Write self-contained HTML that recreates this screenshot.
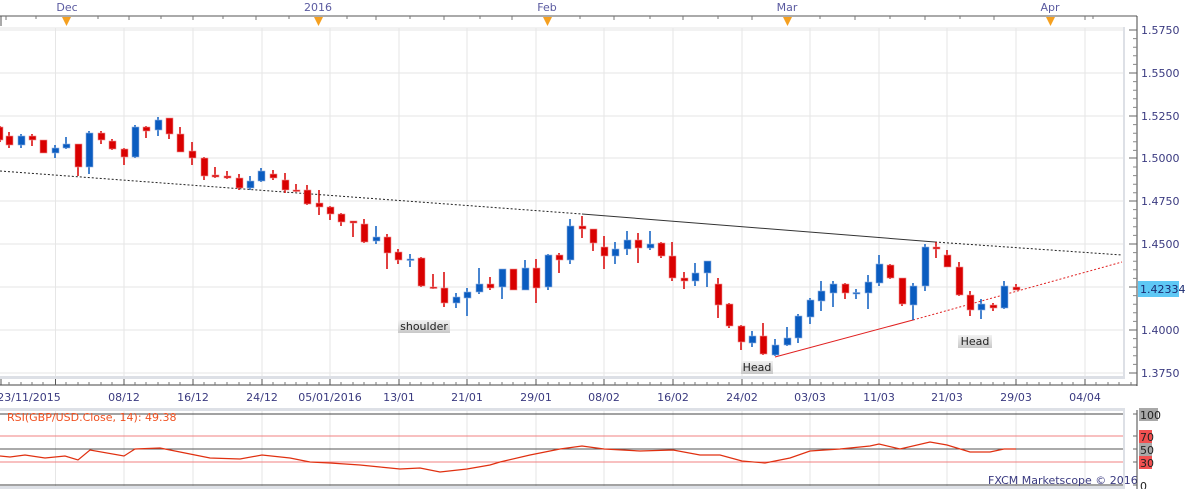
<!DOCTYPE html>
<html><head><meta charset="utf-8"><style>
html,body{margin:0;padding:0;background:#fff;}
svg{display:block;font-family:"DejaVu Sans","Liberation Sans",sans-serif;}
.r line{stroke:#d90000;stroke-width:1.5}
.r rect{fill:#d90000;stroke:#f09090;stroke-width:0.6}
.b line{stroke:#0a5cc0;stroke-width:1.5}
.b rect{fill:#0a5cc0;stroke:#8fb0e0;stroke-width:0.6}
.ax{fill:#3a3a80;font-size:11px}
</style></head><body>
<svg width="1188" height="489" viewBox="0 0 1188 489" xmlns="http://www.w3.org/2000/svg">
<rect width="1188" height="489" fill="#fff"/>
<!-- top axis -->
<line x1="0" y1="16" x2="1137" y2="16" stroke="#555" stroke-width="1"/>
<line x1="1" y1="16" x2="1" y2="26" stroke="#555"/>
<g stroke="#777">
<line x1="6" y1="16" x2="6" y2="20"/><line x1="36" y1="16" x2="36" y2="19"/><line x1="98" y1="16" x2="98" y2="19"/><line x1="129" y1="16" x2="129" y2="20"/><line x1="161" y1="16" x2="161" y2="19"/><line x1="193" y1="16" x2="193" y2="20"/><line x1="223" y1="16" x2="223" y2="19"/><line x1="256" y1="16" x2="256" y2="20"/><line x1="289" y1="16" x2="289" y2="19"/><line x1="347" y1="16" x2="347" y2="19"/><line x1="376" y1="16" x2="376" y2="20"/><line x1="410" y1="16" x2="410" y2="19"/><line x1="444" y1="16" x2="444" y2="20"/><line x1="480" y1="16" x2="480" y2="19"/><line x1="512" y1="16" x2="512" y2="20"/><line x1="580" y1="16" x2="580" y2="19"/><line x1="614" y1="16" x2="614" y2="20"/><line x1="650" y1="16" x2="650" y2="19"/><line x1="683" y1="16" x2="683" y2="20"/><line x1="718" y1="16" x2="718" y2="19"/><line x1="752" y1="16" x2="752" y2="20"/><line x1="820" y1="16" x2="820" y2="19"/><line x1="855" y1="16" x2="855" y2="20"/><line x1="890" y1="16" x2="890" y2="19"/><line x1="925" y1="16" x2="925" y2="20"/><line x1="960" y1="16" x2="960" y2="19"/><line x1="994" y1="16" x2="994" y2="20"/><line x1="1085" y1="16" x2="1085" y2="20"/><line x1="1093" y1="16" x2="1093" y2="19"/>
</g>
<g class="ax" text-anchor="middle" fill="#5a5aa0">
<text x="67" y="11" fill="#5a5aa0">Dec</text><text x="318" y="11" fill="#5a5aa0">2016</text><text x="547" y="11" fill="#5a5aa0">Feb</text><text x="787" y="11" fill="#5a5aa0">Mar</text><text x="1050" y="11" fill="#5a5aa0">Apr</text>
</g>
<g fill="#f5a020">
<polygon points="62,17 71,17 66.5,26"/><polygon points="314,17 323,17 318.5,26"/><polygon points="543,17 552,17 547.5,26"/><polygon points="783,17 792,17 787.5,26"/><polygon points="1046,17 1055,17 1050.5,26"/>
</g>
<!-- plot frame -->
<line x1="0" y1="28" x2="1125" y2="28" stroke="#e4e4e4"/>
<rect x="1123" y="27" width="2" height="351" fill="#dde0e6"/>
<rect x="0" y="376" width="1125" height="3" fill="#dde0e6"/>
<!-- grid -->
<g stroke="#e6e6e6" stroke-width="1">
<line x1="0" y1="30" x2="1123" y2="30"/><line x1="0" y1="73" x2="1123" y2="73"/><line x1="0" y1="116" x2="1123" y2="116"/><line x1="0" y1="158" x2="1123" y2="158"/><line x1="0" y1="201" x2="1123" y2="201"/><line x1="0" y1="244" x2="1123" y2="244"/><line x1="0" y1="287" x2="1123" y2="287"/><line x1="0" y1="330" x2="1123" y2="330"/><line x1="0" y1="373" x2="1123" y2="373"/>
<line x1="55.5" y1="28" x2="55.5" y2="376"/><line x1="124" y1="28" x2="124" y2="376"/><line x1="193" y1="28" x2="193" y2="376"/><line x1="262" y1="28" x2="262" y2="376"/><line x1="330" y1="28" x2="330" y2="376"/><line x1="399" y1="28" x2="399" y2="376"/><line x1="467" y1="28" x2="467" y2="376"/><line x1="536" y1="28" x2="536" y2="376"/><line x1="604" y1="28" x2="604" y2="376"/><line x1="673" y1="28" x2="673" y2="376"/><line x1="742" y1="28" x2="742" y2="376"/><line x1="810" y1="28" x2="810" y2="376"/><line x1="879" y1="28" x2="879" y2="376"/><line x1="947" y1="28" x2="947" y2="376"/><line x1="1016" y1="28" x2="1016" y2="376"/><line x1="1085" y1="28" x2="1085" y2="376"/>
</g>
<!-- trend lines -->
<line x1="0" y1="171" x2="582" y2="214" stroke="#222" stroke-width="1" stroke-dasharray="2,2"/>
<line x1="582" y1="214" x2="935" y2="242" stroke="#333" stroke-width="1"/>
<line x1="935" y1="242" x2="1122" y2="255" stroke="#222" stroke-width="1" stroke-dasharray="2,2"/>
<line x1="775" y1="357" x2="913" y2="320" stroke="#e02020" stroke-width="1"/>
<line x1="913" y1="320" x2="1122" y2="262" stroke="#e02020" stroke-width="1" stroke-dasharray="2,2"/>
<!-- candles -->
<g class="r"><line x1="0" y1="126" x2="0" y2="142"/><rect x="-3" y="127" width="6" height="13"/></g>
<g class="r"><line x1="9" y1="132" x2="9" y2="148"/><rect x="6" y="136" width="7" height="9"/></g>
<g class="b"><line x1="21" y1="134" x2="21" y2="148"/><rect x="18" y="136" width="7" height="9"/></g>
<g class="r"><line x1="32" y1="134" x2="32" y2="146"/><rect x="29" y="136" width="7" height="4"/></g>
<g class="r"><line x1="43" y1="140" x2="43" y2="153"/><rect x="40" y="140" width="7" height="13"/></g>
<g class="b"><line x1="55" y1="145" x2="55" y2="158"/><rect x="52" y="148" width="7" height="5"/></g>
<g class="b"><line x1="66" y1="137" x2="66" y2="149"/><rect x="63" y="144" width="7" height="4"/></g>
<g class="r"><line x1="78" y1="144" x2="78" y2="176"/><rect x="75" y="144" width="7" height="23"/></g>
<g class="b"><line x1="89" y1="131" x2="89" y2="174"/><rect x="86" y="133" width="7" height="34"/></g>
<g class="r"><line x1="101" y1="131" x2="101" y2="144"/><rect x="98" y="133" width="7" height="7"/></g>
<g class="r"><line x1="112" y1="139" x2="112" y2="150"/><rect x="109" y="141" width="7" height="8"/></g>
<g class="r"><line x1="124" y1="148" x2="124" y2="165"/><rect x="121" y="149" width="7" height="8"/></g>
<g class="b"><line x1="135" y1="125" x2="135" y2="158"/><rect x="132" y="127" width="7" height="30"/></g>
<g class="r"><line x1="146" y1="126" x2="146" y2="138"/><rect x="143" y="127" width="7" height="4"/></g>
<g class="b"><line x1="158" y1="117" x2="158" y2="136"/><rect x="155" y="120" width="7" height="10"/></g>
<g class="r"><line x1="169" y1="118" x2="169" y2="139"/><rect x="166" y="118" width="7" height="16"/></g>
<g class="r"><line x1="180" y1="127" x2="180" y2="152"/><rect x="177" y="134" width="7" height="18"/></g>
<g class="r"><line x1="192" y1="142" x2="192" y2="165"/><rect x="189" y="151" width="7" height="7"/></g>
<g class="r"><line x1="204" y1="157" x2="204" y2="180"/><rect x="201" y="158" width="7" height="18"/></g>
<g class="r"><line x1="215" y1="167" x2="215" y2="178"/><rect x="212" y="175" width="7" height="2"/></g>
<g class="r"><line x1="227" y1="171" x2="227" y2="179"/><rect x="224" y="176" width="7" height="2"/></g>
<g class="r"><line x1="239" y1="174" x2="239" y2="190"/><rect x="236" y="178" width="7" height="10"/></g>
<g class="b"><line x1="250" y1="176" x2="250" y2="190"/><rect x="247" y="181" width="7" height="7"/></g>
<g class="b"><line x1="261" y1="168" x2="261" y2="182"/><rect x="258" y="171" width="7" height="10"/></g>
<g class="r"><line x1="273" y1="170" x2="273" y2="180"/><rect x="270" y="174" width="7" height="4"/></g>
<g class="r"><line x1="285" y1="173" x2="285" y2="193"/><rect x="282" y="180" width="7" height="10"/></g>
<g class="r"><line x1="296" y1="184" x2="296" y2="192"/><rect x="293" y="190" width="7" height="1.5"/></g>
<g class="r"><line x1="307" y1="185" x2="307" y2="205"/><rect x="304" y="190" width="7" height="14"/></g>
<g class="r"><line x1="319" y1="190" x2="319" y2="215"/><rect x="316" y="203" width="7" height="4"/></g>
<g class="r"><line x1="330" y1="206" x2="330" y2="220"/><rect x="327" y="207" width="7" height="7"/></g>
<g class="r"><line x1="341" y1="213" x2="341" y2="226"/><rect x="338" y="214" width="7" height="8"/></g>
<g class="r"><line x1="353" y1="221" x2="353" y2="237"/><rect x="350" y="221" width="7" height="2"/></g>
<g class="r"><line x1="364" y1="219" x2="364" y2="243"/><rect x="361" y="224" width="7" height="18"/></g>
<g class="b"><line x1="376" y1="226" x2="376" y2="244"/><rect x="373" y="237" width="7" height="4"/></g>
<g class="r"><line x1="387" y1="234" x2="387" y2="269"/><rect x="384" y="237" width="7" height="16"/></g>
<g class="r"><line x1="398" y1="249" x2="398" y2="264"/><rect x="395" y="252" width="7" height="8"/></g>
<g class="b"><line x1="410" y1="254" x2="410" y2="267"/><rect x="407" y="259" width="7" height="1.5"/></g>
<g class="r"><line x1="421" y1="257" x2="421" y2="287"/><rect x="418" y="258" width="7" height="28"/></g>
<g class="r"><line x1="433" y1="274" x2="433" y2="289"/><rect x="430" y="287" width="7" height="1.5"/></g>
<g class="r"><line x1="444" y1="272" x2="444" y2="307"/><rect x="441" y="288" width="7" height="15"/></g>
<g class="b"><line x1="456" y1="293" x2="456" y2="308"/><rect x="453" y="297" width="7" height="6"/></g>
<g class="b"><line x1="467" y1="288" x2="467" y2="316"/><rect x="464" y="292" width="7" height="6"/></g>
<g class="b"><line x1="479" y1="268" x2="479" y2="294"/><rect x="476" y="284" width="7" height="8"/></g>
<g class="r"><line x1="490" y1="277" x2="490" y2="290"/><rect x="487" y="284" width="7" height="4"/></g>
<g class="b"><line x1="502" y1="269" x2="502" y2="299"/><rect x="499" y="269" width="7" height="18"/></g>
<g class="r"><line x1="513" y1="269" x2="513" y2="290"/><rect x="510" y="269" width="7" height="21"/></g>
<g class="b"><line x1="525" y1="260" x2="525" y2="290"/><rect x="522" y="268" width="7" height="22"/></g>
<g class="r"><line x1="536" y1="259" x2="536" y2="303"/><rect x="533" y="268" width="7" height="20"/></g>
<g class="b"><line x1="548" y1="254" x2="548" y2="290"/><rect x="545" y="255" width="7" height="32"/></g>
<g class="r"><line x1="559" y1="253" x2="559" y2="273"/><rect x="556" y="255" width="7" height="5"/></g>
<g class="b"><line x1="570" y1="219" x2="570" y2="264"/><rect x="567" y="226" width="7" height="34"/></g>
<g class="r"><line x1="582" y1="216" x2="582" y2="238"/><rect x="579" y="226" width="7" height="3"/></g>
<g class="r"><line x1="593" y1="229" x2="593" y2="251"/><rect x="590" y="229" width="7" height="14"/></g>
<g class="r"><line x1="604" y1="236" x2="604" y2="269"/><rect x="601" y="247" width="7" height="9"/></g>
<g class="b"><line x1="615" y1="242" x2="615" y2="264"/><rect x="612" y="249" width="7" height="7"/></g>
<g class="b"><line x1="627" y1="231" x2="627" y2="255"/><rect x="624" y="240" width="7" height="9"/></g>
<g class="r"><line x1="638" y1="233" x2="638" y2="263"/><rect x="635" y="240" width="7" height="8"/></g>
<g class="b"><line x1="650" y1="231" x2="650" y2="250"/><rect x="647" y="244" width="7" height="4"/></g>
<g class="r"><line x1="661" y1="242" x2="661" y2="258"/><rect x="658" y="243" width="7" height="13"/></g>
<g class="r"><line x1="672" y1="242" x2="672" y2="281"/><rect x="669" y="256" width="7" height="22"/></g>
<g class="r"><line x1="684" y1="272" x2="684" y2="289"/><rect x="681" y="278" width="7" height="3"/></g>
<g class="b"><line x1="695" y1="263" x2="695" y2="286"/><rect x="692" y="273" width="7" height="8"/></g>
<g class="b"><line x1="707" y1="261" x2="707" y2="287"/><rect x="704" y="261" width="7" height="12"/></g>
<g class="r"><line x1="718" y1="278" x2="718" y2="318"/><rect x="715" y="284" width="7" height="21"/></g>
<g class="r"><line x1="729" y1="303" x2="729" y2="328"/><rect x="726" y="304" width="7" height="22"/></g>
<g class="r"><line x1="741" y1="325" x2="741" y2="350"/><rect x="738" y="326" width="7" height="16"/></g>
<g class="b"><line x1="752" y1="331" x2="752" y2="347"/><rect x="749" y="336" width="7" height="7"/></g>
<g class="r"><line x1="763" y1="323" x2="763" y2="355"/><rect x="760" y="336" width="7" height="18"/></g>
<g class="b"><line x1="775" y1="339" x2="775" y2="356"/><rect x="772" y="345" width="7" height="10"/></g>
<g class="b"><line x1="787" y1="327" x2="787" y2="346"/><rect x="784" y="338" width="7" height="7"/></g>
<g class="b"><line x1="798" y1="314" x2="798" y2="343"/><rect x="795" y="316" width="7" height="22"/></g>
<g class="b"><line x1="810" y1="298" x2="810" y2="324"/><rect x="807" y="300" width="7" height="17"/></g>
<g class="b"><line x1="821" y1="281" x2="821" y2="311"/><rect x="818" y="291" width="7" height="10"/></g>
<g class="b"><line x1="833" y1="281" x2="833" y2="307"/><rect x="830" y="284" width="7" height="9"/></g>
<g class="r"><line x1="845" y1="283" x2="845" y2="299"/><rect x="842" y="284" width="7" height="9"/></g>
<g class="b"><line x1="856" y1="289" x2="856" y2="299"/><rect x="853" y="292.5" width="7" height="1.5"/></g>
<g class="b"><line x1="868" y1="275" x2="868" y2="309"/><rect x="865" y="282" width="7" height="11"/></g>
<g class="b"><line x1="879" y1="255" x2="879" y2="286"/><rect x="876" y="264" width="7" height="19"/></g>
<g class="r"><line x1="890" y1="264" x2="890" y2="279"/><rect x="887" y="265" width="7" height="13"/></g>
<g class="r"><line x1="902" y1="278" x2="902" y2="306"/><rect x="899" y="278" width="7" height="26"/></g>
<g class="b"><line x1="913" y1="283" x2="913" y2="320"/><rect x="910" y="286" width="7" height="19"/></g>
<g class="b"><line x1="925" y1="244" x2="925" y2="291"/><rect x="922" y="247" width="7" height="39"/></g>
<g class="r"><line x1="936" y1="242" x2="936" y2="258"/><rect x="933" y="247" width="7" height="2"/></g>
<g class="r"><line x1="947" y1="250" x2="947" y2="267"/><rect x="944" y="255" width="7" height="12"/></g>
<g class="r"><line x1="959" y1="262" x2="959" y2="296"/><rect x="956" y="267" width="7" height="28"/></g>
<g class="r"><line x1="970" y1="291" x2="970" y2="316"/><rect x="967" y="295" width="7" height="15"/></g>
<g class="b"><line x1="981" y1="299" x2="981" y2="319"/><rect x="978" y="304" width="7" height="6"/></g>
<g class="r"><line x1="993" y1="303" x2="993" y2="311"/><rect x="990" y="305" width="7" height="3"/></g>
<g class="b"><line x1="1004" y1="281" x2="1004" y2="309"/><rect x="1001" y="286" width="7" height="22"/></g>
<g class="r"><line x1="1016" y1="284" x2="1016" y2="290"/><rect x="1013" y="287" width="7" height="3"/></g>
<!-- annotation labels -->
<defs><linearGradient id="lg" x1="0" y1="0" x2="0" y2="1"><stop offset="0" stop-color="#f2f2f2"/><stop offset="1" stop-color="#c8c8c8"/></linearGradient></defs>
<rect x="398" y="320" width="52" height="13" fill="url(#lg)"/><text x="424" y="330" text-anchor="middle" font-size="11" fill="#222">shoulder</text>
<rect x="741" y="361" width="32" height="13" fill="url(#lg)"/><text x="757" y="371" text-anchor="middle" font-size="11" fill="#222">Head</text>
<rect x="958" y="335" width="34" height="13" fill="url(#lg)"/><text x="975" y="345" text-anchor="middle" font-size="11" fill="#222">Head</text>
<!-- right axis -->
<line x1="1137" y1="16" x2="1137" y2="386" stroke="#444"/>
<g stroke="#666">
<line x1="1129" y1="30" x2="1137" y2="30"/><line x1="1129" y1="73" x2="1137" y2="73"/><line x1="1129" y1="116" x2="1137" y2="116"/><line x1="1129" y1="158" x2="1137" y2="158"/><line x1="1129" y1="201" x2="1137" y2="201"/><line x1="1129" y1="244" x2="1137" y2="244"/><line x1="1129" y1="287" x2="1137" y2="287"/><line x1="1129" y1="330" x2="1137" y2="330"/><line x1="1129" y1="373" x2="1137" y2="373"/>
</g>
<path d="M1133 38.6h4M1133 47.2h4M1133 55.8h4M1133 64.4h4M1133 81.6h4M1133 90.2h4M1133 98.8h4M1133 107.4h4M1133 124.6h4M1133 133.2h4M1133 141.8h4M1133 150.4h4M1133 167h4M1133 175.6h4M1133 184.2h4M1133 192.8h4M1133 209.6h4M1133 218.2h4M1133 226.8h4M1133 235.4h4M1133 252.6h4M1133 261.2h4M1133 269.8h4M1133 278.4h4M1133 295.6h4M1133 304.2h4M1133 312.8h4M1133 321.4h4M1133 338.6h4M1133 347.2h4M1133 355.8h4M1133 364.4h4" stroke="#888"/>
<g class="ax">
<text x="1141" y="34">1.5750</text><text x="1141" y="77">1.5500</text><text x="1141" y="120">1.5250</text><text x="1141" y="162">1.5000</text><text x="1141" y="205">1.4750</text><text x="1141" y="248">1.4500</text><text x="1141" y="334">1.4000</text><text x="1141" y="377">1.3750</text>
</g>
<rect x="1138" y="281" width="41" height="16" fill="#5ec8f5"/>
<text x="1140" y="293" font-size="11" fill="#1a2a70">1.42334</text>
<!-- bottom date axis -->
<line x1="0" y1="385" x2="1137" y2="385" stroke="#444"/>
<path d="M1 379v6M55.5 379v6M124 379v6M193 379v6M262 379v6M330 379v6M399 379v6M467 379v6M536 379v6M604 379v6M673 379v6M742 379v6M810 379v6M879 379v6M947 379v6M1016 379v6M1085 379v6" stroke="#555"/>
<path d="M9 382v3M21 382v3M32 382v3M43 382v3M66 382v3M78 382v3M89 382v3M101 382v3M112 382v3M135 382v3M146 382v3M158 382v3M169 382v3M180 382v3M204 382v3M215 382v3M227 382v3M239 382v3M250 382v3M273 382v3M285 382v3M296 382v3M307 382v3M319 382v3M341 382v3M353 382v3M364 382v3M376 382v3M387 382v3M410 382v3M421 382v3M433 382v3M444 382v3M456 382v3M479 382v3M490 382v3M502 382v3M513 382v3M525 382v3M548 382v3M559 382v3M570 382v3M582 382v3M593 382v3M615 382v3M627 382v3M638 382v3M650 382v3M661 382v3M684 382v3M695 382v3M707 382v3M718 382v3M729 382v3M752 382v3M763 382v3M775 382v3M787 382v3M798 382v3M821 382v3M833 382v3M845 382v3M856 382v3M868 382v3M890 382v3M902 382v3M913 382v3M925 382v3M936 382v3M959 382v3M970 382v3M981 382v3M993 382v3M1004 382v3M1027 382v3M1039 382v3M1050 382v3M1062 382v3M1073 382v3M1096 382v3M1108 382v3M1119 382v3M1131 382v3" stroke="#777"/>
<g class="ax" text-anchor="middle">
<text x="29" y="401">23/11/2015</text><text x="124" y="401">08/12</text><text x="193" y="401">16/12</text><text x="262" y="401">24/12</text><text x="330" y="401">05/01/2016</text><text x="399" y="401">13/01</text><text x="467" y="401">21/01</text><text x="536" y="401">29/01</text><text x="604" y="401">08/02</text><text x="673" y="401">16/02</text><text x="742" y="401">24/02</text><text x="810" y="401">03/03</text><text x="879" y="401">11/03</text><text x="947" y="401">21/03</text><text x="1016" y="401">29/03</text><text x="1085" y="401">04/04</text>
</g>
<!-- RSI panel -->
<rect x="0" y="408" width="1125" height="3" fill="#dde0e6"/>
<rect x="1123" y="408" width="2" height="81" fill="#dde0e6"/>
<rect x="0" y="486" width="1125" height="3" fill="#dde0e6"/>
<g stroke="#e6e6e6">
<line x1="55.5" y1="411" x2="55.5" y2="486"/><line x1="124" y1="411" x2="124" y2="486"/><line x1="193" y1="411" x2="193" y2="486"/><line x1="262" y1="411" x2="262" y2="486"/><line x1="330" y1="411" x2="330" y2="486"/><line x1="399" y1="411" x2="399" y2="486"/><line x1="467" y1="411" x2="467" y2="486"/><line x1="536" y1="411" x2="536" y2="486"/><line x1="604" y1="411" x2="604" y2="486"/><line x1="673" y1="411" x2="673" y2="486"/><line x1="742" y1="411" x2="742" y2="486"/><line x1="810" y1="411" x2="810" y2="486"/><line x1="879" y1="411" x2="879" y2="486"/><line x1="947" y1="411" x2="947" y2="486"/><line x1="1016" y1="411" x2="1016" y2="486"/><line x1="1085" y1="411" x2="1085" y2="486"/>
</g>
<line x1="0" y1="414" x2="1123" y2="414" stroke="#444"/>
<line x1="0" y1="436" x2="1123" y2="436" stroke="#f08080"/>
<line x1="0" y1="449" x2="1123" y2="449" stroke="#555"/>
<line x1="0" y1="462" x2="1123" y2="462" stroke="#f08080"/>
<line x1="0" y1="485" x2="1123" y2="485" stroke="#444"/>
<polyline fill="none" stroke="#e03010" stroke-width="1.2" points="0,456 10,457 25,455 45,458 65,456 78,460 90,450 124,456 135,449 160,448 180,452 210,458 240,459 262,455 290,458 310,462 330,463 360,465 380,467 400,469 420,468 440,472 467,469 490,465 500,462 530,455 560,449 582,446 604,449 640,451 673,450 700,455 720,455 742,461 765,463 790,458 810,451 840,449 870,446 879,444 900,449 930,442 947,445 970,452 990,452 1004,449 1016,449"/>
<text x="7" y="421" font-size="11" fill="#f05020">RSI(GBP/USD.Close, 14): 49.38</text>
<text x="988" y="484" font-size="11" fill="#3a3a80">FXCM Marketscope © 2016</text>
<line x1="1137" y1="410" x2="1137" y2="489" stroke="#444"/>
<g stroke="#666"><line x1="1133" y1="414" x2="1137" y2="414"/><line x1="1133" y1="436" x2="1137" y2="436"/><line x1="1133" y1="449" x2="1137" y2="449"/><line x1="1133" y1="462" x2="1137" y2="462"/><line x1="1133" y1="485" x2="1137" y2="485"/></g>
<rect x="1139" y="408" width="19" height="13" fill="#a8a8a8"/><text x="1140" y="419" font-size="11" fill="#222">100</text>
<rect x="1139" y="430" width="13" height="13" fill="#f05050"/><text x="1140" y="441" font-size="11" fill="#222">70</text>
<rect x="1139" y="443" width="13" height="13" fill="#a8a8a8"/><text x="1140" y="454" font-size="11" fill="#222">50</text>
<rect x="1139" y="456" width="13" height="13" fill="#f05050"/><text x="1140" y="467" font-size="11" fill="#222">30</text>
<text x="1140" y="490" font-size="11" fill="#222">0</text>
</svg>
</body></html>
